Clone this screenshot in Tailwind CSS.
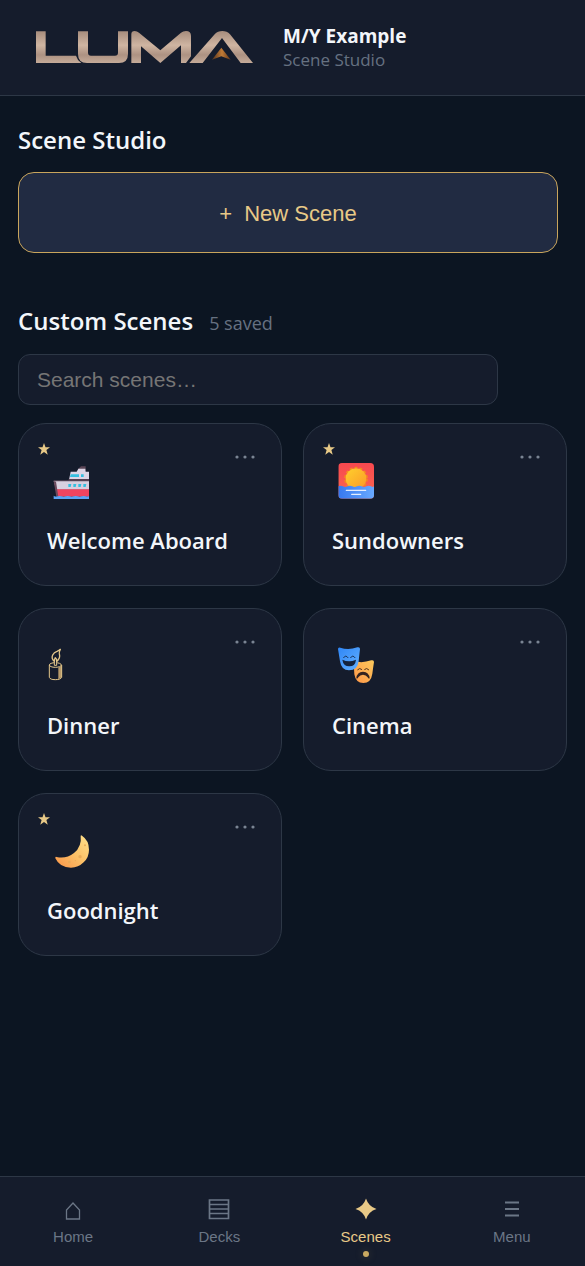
<!DOCTYPE html>
<html lang="en">
<head>
    <meta charset="UTF-8">
    <meta name="viewport" content="width=device-width, initial-scale=1.0">
    <title>Luma - Scene Studio</title>
    <script src="https://cdn.jsdelivr.net/npm/@tailwindcss/browser@4"></script>
</head>
<body class="min-h-screen flex flex-col bg-[#0c1522] text-[#f3f6fa] font-['Open_Sans','Noto_Sans',sans-serif]">
    <header class="flex items-center gap-[29px] h-24 px-[35px] bg-[#151c2c] border-b border-[#2d3746]">
        <svg class="w-[219px] h-[34px] mb-[2px] shrink-0" viewBox="105 90 657 102" role="img" aria-label="Luma">
            <defs>
                <linearGradient id="metal" x1="0" y1="92" x2="0" y2="189" gradientUnits="userSpaceOnUse">
                    <stop offset="0" stop-color="#a58b7b"/>
                    <stop offset=".45" stop-color="#cfb5a2"/>
                    <stop offset=".75" stop-color="#ad9282"/>
                    <stop offset="1" stop-color="#c5ab99"/>
                </linearGradient>
                <linearGradient id="copper" x1="640" y1="0" x2="692" y2="0" gradientUnits="userSpaceOnUse">
                    <stop offset="0" stop-color="#5f3a20"/>
                    <stop offset=".5" stop-color="#c17b36"/>
                    <stop offset="1" stop-color="#5f3519"/>
                </linearGradient>
            </defs>
            <g fill="url(#metal)">
                <path d="M108 94h29v73h91q4 14 16 22H108z"/>
                <path d="M234 94h30v64q0 9 9 9h72q9 0 9-9V94h30v68q0 27-27 27h-96q-27 0-27-27z"/>
                <path d="M394 189V103q0-10 10-10 7 0 13 5l64 53 62-53q6-5 15-5 15 0 15 15v61l-15 20h-15v-53l-62 53-58-50v50z"/>
                <path d="M568 189l76-86q9-10 23-10t23 10l69 86h-37l-56-75-58 75z"/>
            </g>
            <path d="M664 143l28 36-28-10-28 10z" fill="url(#copper)"/>
        </svg>
        <div>
            <p class="text-[19px] leading-6 font-bold">M/Y Example</p>
            <p class="text-[17px] leading-6 text-[#667181]">Scene Studio</p>
        </div>
    </header>

    <main class="flex-1 px-[18px] pt-7 pb-8">
        <h1 class="text-2xl leading-8 font-semibold">Scene Studio</h1>
        <div class="mt-4 pr-[9px]">
            <button type="button" class="w-full h-[81px] pt-[2px] flex items-center justify-center gap-3 rounded-2xl border border-[#c9a55c] bg-[#212b42] text-[#e8c987] text-[22px] font-['Liberation_Sans',Arial,sans-serif]">
                <span>+</span>
                <span>New Scene</span>
            </button>
        </div>

        <div class="mt-[52px] flex items-center gap-4">
            <h2 class="text-2xl leading-8 font-semibold">Custom Scenes</h2>
            <span class="pt-1 text-lg leading-7 text-[#667181]">5 saved</span>
        </div>
        <input type="search" aria-label="Search scenes" placeholder="Search scenes…" class="block mt-[17px] w-full max-w-[480px] h-[51px] px-[18px] rounded-xl border border-[#2d3746] bg-[#151c2c] text-[21px] placeholder:text-[#757575] font-['Liberation_Sans',Arial,sans-serif]">

        <div class="mt-[18px] grid grid-cols-2 gap-x-[21px] gap-y-[22px]">
            <!-- Welcome Aboard -->
            <article class="relative rounded-[28px] border border-[#2d3746] bg-[#151c2c]">
                <button type="button" class="w-full px-7 pt-7 pb-[29px] text-left">
                    <svg class="block size-12" viewBox="141 111 144 144" aria-hidden="true">
                        <path d="M235 161l8-7h14v10h-22z" fill="#5b4657"/>
                        <path d="M212 170h18l5-9h21l1 9h10v24h-60z" fill="#dcd5e6"/>
                        <path d="M206 192h61v5h-61z" fill="#554052"/>
                        <path d="M161 198h106v26h-98z" fill="#d8d0df"/>
                        <path d="M161 196h106v3H161z" fill="#5a4859"/>
                        <path d="M167 223h100v22h-94z" fill="#ef4460"/>
                        <path d="M161 198l7 2 7 45h-6z" fill="#6b4a5d"/>
                        <path d="M212 178h25v8h-27zM243 178h8v8h-8zM205 207h9l-2 9h-7zM220 207h9l-2 9h-7zM235 207h9l-2 9h-7zM250 207h9l-2 9h-7z" fill="#35bfe0"/>
                        <path d="M161 242q6 4 12 2t12 0 12 0 12 0 12 0 12 0 12 0 12 0 10-1v9H161z" fill="#5aa4f5"/>
                    </svg>
                    <span class="block mt-6 text-[22px] leading-8 font-semibold">Welcome Aboard</span>
                </button>
                <svg class="absolute left-[19px] top-[19px] size-3" viewBox="0 0 24 24" aria-label="Favourite"><path fill="#e8c987" d="M12 0l3 8.500h9l-7.200 5.500 2.700 9.500-7.500-5.500-7.500 5.500 2.700-9.500L0 8.500h9z"/></svg>
                <button type="button" aria-label="Options for Welcome Aboard" class="absolute right-[18px] top-[21px] p-2">
                    <svg class="w-5 h-2" viewBox="0 0 20 8" fill="#7a8493"><circle cx="2" cy="4" r="1.600"/><circle cx="10" cy="4" r="1.600"/><circle cx="18" cy="4" r="1.600"/></svg>
                </button>
            </article>

            <!-- Sundowners -->
            <article class="relative rounded-[28px] border border-[#2d3746] bg-[#151c2c]">
                <button type="button" class="w-full px-7 pt-7 pb-[29px] text-left">
                    <svg class="block size-12" viewBox="96 111 144 144" aria-hidden="true">
                        <defs>
                            <linearGradient id="sky" x1="0" y1="0" x2="0" y2="1"><stop offset="0" stop-color="#f8484f"/><stop offset="1" stop-color="#fa6a50"/></linearGradient>
                            <linearGradient id="sun" x1="0" y1="0" x2="1" y2="1"><stop offset="0" stop-color="#ffd02c"/><stop offset="1" stop-color="#fb9a28"/></linearGradient>
                            <linearGradient id="sea" x1="0" y1="0" x2="1" y2="0"><stop offset="0" stop-color="#3778f0"/><stop offset="1" stop-color="#68a9ff"/></linearGradient>
                            <clipPath id="frame"><rect x="115" y="144" width="107" height="107" rx="11"/></clipPath>
                        </defs>
                        <g clip-path="url(#frame)">
                            <path d="M115 144h107v107H115z" fill="url(#sky)"/>
                            <circle cx="168" cy="191" r="33" fill="none" stroke="#f58a1f" stroke-width="5" stroke-dasharray="9 6"/>
                            <circle cx="168" cy="191" r="31" fill="url(#sun)"/>
                            <path d="M115 214q7-4 14 0t14 0 14 0 14 0 14 0 14 0 14 0 9-1v38H115z" fill="url(#sea)"/>
                            <path d="M139 226h58M155 238h27" stroke="#e4eeff" stroke-width="4" stroke-linecap="round"/>
                        </g>
                    </svg>
                    <span class="block mt-6 text-[22px] leading-8 font-semibold">Sundowners</span>
                </button>
                <svg class="absolute left-[19px] top-[19px] size-3" viewBox="0 0 24 24" aria-label="Favourite"><path fill="#e8c987" d="M12 0l3 8.500h9l-7.200 5.500 2.700 9.500-7.500-5.500-7.500 5.500 2.700-9.500L0 8.500h9z"/></svg>
                <button type="button" aria-label="Options for Sundowners" class="absolute right-[18px] top-[21px] p-2">
                    <svg class="w-5 h-2" viewBox="0 0 20 8" fill="#7a8493"><circle cx="2" cy="4" r="1.600"/><circle cx="10" cy="4" r="1.600"/><circle cx="18" cy="4" r="1.600"/></svg>
                </button>
            </article>

            <!-- Dinner -->
            <article class="relative rounded-[28px] border border-[#2d3746] bg-[#151c2c]">
                <button type="button" class="w-full px-7 pt-7 pb-[29px] text-left">
                    <svg class="block size-12" viewBox="141 111 144 144" fill="none" stroke="#e3c68a" stroke-width="3" stroke-linejoin="round" aria-hidden="true">
                        <path d="M175 203l10-6v35l-10 6z" fill="#b99b6b" stroke="none"/>
                        <path d="M148 195v37q2 7 18 7t19-7v-37"/>
                        <ellipse cx="166" cy="195" rx="18" ry="7"/>
                        <path d="M163 183v13h7v-13" fill="#151c2c"/>
                        <path d="M163 184q-10-8-5-19 4-8 13-11 7-3 10-6-4 7-3 13 4 15-8 23 1-7-4-11-3 5-3 11z" stroke-width="4"/>
                    </svg>
                    <span class="block mt-6 text-[22px] leading-8 font-semibold">Dinner</span>
                </button>
                <button type="button" aria-label="Options for Dinner" class="absolute right-[18px] top-[21px] p-2">
                    <svg class="w-5 h-2" viewBox="0 0 20 8" fill="#7a8493"><circle cx="2" cy="4" r="1.600"/><circle cx="10" cy="4" r="1.600"/><circle cx="18" cy="4" r="1.600"/></svg>
                </button>
            </article>

            <!-- Cinema -->
            <article class="relative rounded-[28px] border border-[#2d3746] bg-[#151c2c]">
                <button type="button" class="w-full px-7 pt-7 pb-[29px] text-left">
                    <svg class="block size-12" viewBox="96 111 144 144" aria-hidden="true">
                        <defs>
                            <linearGradient id="comedy" x1="0" y1="0" x2="1" y2="1"><stop offset="0" stop-color="#2f86f6"/><stop offset="1" stop-color="#62b0ff"/></linearGradient>
                            <linearGradient id="tragedy" x1="0" y1="1" x2="1" y2="0"><stop offset="0" stop-color="#ff9648"/><stop offset="1" stop-color="#fbc95c"/></linearGradient>
                        </defs>
                        <path d="M161 187q1-4 5-3 21 6 48-3 8-2 8 5-3 19-5 35-4 28-27 28t-27-26q-1-18-2-36z" fill="url(#tragedy)"/>
                        <path d="M114 147q0-6 7-4 24 8 51-1 8-2 8 5-2 17-4 36-3 28-29 28-23 0-27-27z" fill="url(#comedy)"/>
                        <path d="M127 179q20 9 41 0-2 20-20 20t-21-20z" fill="#14233d"/>
                        <path d="M131 173q6-10 13 0M152 173q6-10 13 0" fill="none" stroke="#173157" stroke-width="3" stroke-linecap="round"/>
                        <path d="M169 235q2-20 20-20t20 20q-4 2-6-3-5-8-14-8t-14 8q-2 5-6 3z" fill="#35231f"/>
                        <path d="M173 209q6-7 12-1M194 208q6-6 12 1" fill="none" stroke="#4e321f" stroke-width="3" stroke-linecap="round"/>
                    </svg>
                    <span class="block mt-6 text-[22px] leading-8 font-semibold">Cinema</span>
                </button>
                <button type="button" aria-label="Options for Cinema" class="absolute right-[18px] top-[21px] p-2">
                    <svg class="w-5 h-2" viewBox="0 0 20 8" fill="#7a8493"><circle cx="2" cy="4" r="1.600"/><circle cx="10" cy="4" r="1.600"/><circle cx="18" cy="4" r="1.600"/></svg>
                </button>
            </article>

            <!-- Goodnight -->
            <article class="relative rounded-[28px] border border-[#2d3746] bg-[#151c2c]">
                <button type="button" class="w-full px-7 pt-7 pb-[29px] text-left">
                    <svg class="block size-12" viewBox="141 111 144 144" aria-hidden="true">
                        <defs>
                            <linearGradient id="moon" x1="0" y1="1" x2="1" y2="0"><stop offset="0" stop-color="#fb9448"/><stop offset=".5" stop-color="#fbc067"/><stop offset="1" stop-color="#ffe28c"/></linearGradient>
                        </defs>
                        <path d="M242 152q1-2 4 0 21 14 21 42 0 23-16 38-16 16-38 16-34 0-47-28-1-6 4-4 29 6 52-12 24-20 20-52z" fill="url(#moon)"/>
                        <g fill="#eaac59">
                            <circle cx="240" cy="215" r="5"/>
                            <circle cx="208" cy="231" r="4"/>
                            <circle cx="255" cy="181" r="3"/>
                            <circle cx="226" cy="227" r="2"/>
                        </g>
                    </svg>
                    <span class="block mt-6 text-[22px] leading-8 font-semibold">Goodnight</span>
                </button>
                <svg class="absolute left-[19px] top-[19px] size-3" viewBox="0 0 24 24" aria-label="Favourite"><path fill="#e8c987" d="M12 0l3 8.500h9l-7.200 5.500 2.700 9.500-7.500-5.500-7.500 5.500 2.700-9.500L0 8.500h9z"/></svg>
                <button type="button" aria-label="Options for Goodnight" class="absolute right-[18px] top-[21px] p-2">
                    <svg class="w-5 h-2" viewBox="0 0 20 8" fill="#7a8493"><circle cx="2" cy="4" r="1.600"/><circle cx="10" cy="4" r="1.600"/><circle cx="18" cy="4" r="1.600"/></svg>
                </button>
            </article>
        </div>
    </main>

    <nav class="sticky bottom-0 grid grid-cols-4 pt-[21px] pb-[9px] border-t border-[#2d3746] bg-[#151c2c] text-[15px] leading-5 text-[#6b7686] font-['Liberation_Sans',Arial,sans-serif]">
        <button type="button" class="flex flex-col items-center">
            <svg class="size-6" viewBox="0 0 24 24" fill="none" stroke="currentColor" stroke-width="1.300"><path d="M5.500 21v-9L12 5l6.500 7v9z"/></svg>
            <span class="mt-[5px]">Home</span>
        </button>
        <button type="button" class="flex flex-col items-center">
            <svg class="size-6" viewBox="0 0 24 24" fill="none" stroke="currentColor" stroke-width="1.500"><path d="M2.500 2h19v18.500h-19zM2.500 6.500h19M2.500 11h19M2.500 15.500h19" stroke-width="1.700"/></svg>
            <span class="mt-[5px]">Decks</span>
        </button>
        <button type="button" aria-current="page" class="flex flex-col items-center text-[#e8c987]">
            <svg class="size-6" viewBox="0 0 24 24" fill="currentColor"><path d="M12 0.500q2.500 8 10.500 10.500-8 2.500-10.500 10.500Q9.500 13.500 1.500 11 9.500 8.500 12 .5z"/></svg>
            <span class="mt-[5px]">Scenes</span>
            <span class="mt-1 size-[6px] rounded-full bg-[#c9a961] shadow-[0_0_8px_#c9a96140]"></span>
        </button>
        <button type="button" class="flex flex-col items-center">
            <svg class="size-6" viewBox="0 0 24 24" fill="none" stroke="currentColor" stroke-width="2.200"><path d="M5 4.500h14M5 11h14M5 17.500h14"/></svg>
            <span class="mt-[5px]">Menu</span>
        </button>
    </nav>
</body>
</html>
